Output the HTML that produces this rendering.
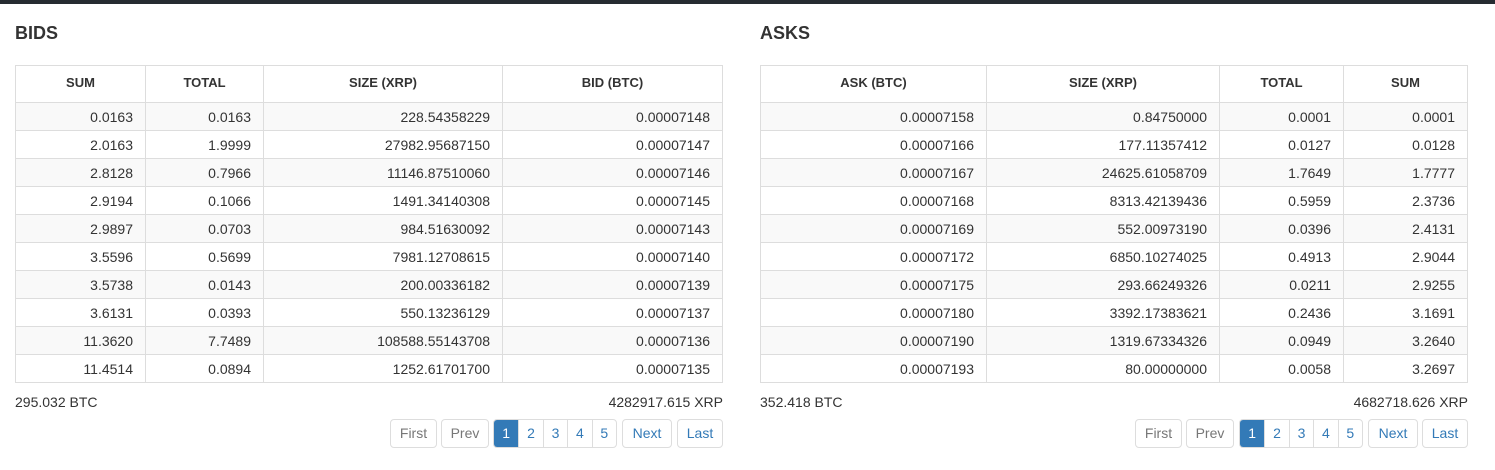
<!DOCTYPE html>
<html><head><meta charset="utf-8"><style>
*{box-sizing:border-box;margin:0;padding:0}
body{width:1495px;height:470px;background:#fff;font-family:"Liberation Sans",sans-serif;color:#333;position:relative;overflow:hidden}
.bar{position:absolute;left:0;top:0;width:1495px;height:4px;background:#262b31}
h2{position:absolute;top:23px;font-size:18px;font-weight:bold;color:#333}
table{position:absolute;top:65px;border-collapse:collapse;table-layout:fixed;font-size:14px}
th{height:37px;font-size:13px;font-weight:bold;text-align:center;border:1px solid #ddd;padding:0 8px 4px}
td{height:28px;text-align:right;border:1px solid #ddd;padding:0 12px;color:#333}
tr:nth-child(even) td{background:#f9f9f9}
.tot{position:absolute;top:394px;font-size:14px}
.pg{position:absolute;top:419px;height:29px;border:1px solid #ddd;border-radius:4px;font-size:14px;line-height:27px;text-align:center;color:#777;background:#fff}
.grp{position:absolute;top:419px;height:29px;display:flex;border:1px solid #ddd;border-radius:4px;overflow:hidden;font-size:14px;line-height:27px}
.grp span{width:25px;text-align:center;color:#337ab7;border-left:1px solid #ddd}
.grp span:first-child{border-left:none;background:#337ab7;color:#fff;width:25px}
.blue{color:#337ab7}
</style></head><body>
<div class="bar"></div>
<h2 style="left:15px">BIDS</h2>
<h2 style="left:760px">ASKS</h2>
<table style="left:15px;width:707px">
<colgroup><col style="width:130px"><col style="width:118px"><col style="width:239px"><col style="width:220px"></colgroup>
<tr><th>SUM</th><th>TOTAL</th><th>SIZE (XRP)</th><th>BID (BTC)</th></tr>
<tr><td>0.0163</td><td>0.0163</td><td>228.54358229</td><td>0.00007148</td></tr>
<tr><td>2.0163</td><td>1.9999</td><td>27982.95687150</td><td>0.00007147</td></tr>
<tr><td>2.8128</td><td>0.7966</td><td>11146.87510060</td><td>0.00007146</td></tr>
<tr><td>2.9194</td><td>0.1066</td><td>1491.34140308</td><td>0.00007145</td></tr>
<tr><td>2.9897</td><td>0.0703</td><td>984.51630092</td><td>0.00007143</td></tr>
<tr><td>3.5596</td><td>0.5699</td><td>7981.12708615</td><td>0.00007140</td></tr>
<tr><td>3.5738</td><td>0.0143</td><td>200.00336182</td><td>0.00007139</td></tr>
<tr><td>3.6131</td><td>0.0393</td><td>550.13236129</td><td>0.00007137</td></tr>
<tr><td>11.3620</td><td>7.7489</td><td>108588.55143708</td><td>0.00007136</td></tr>
<tr><td>11.4514</td><td>0.0894</td><td>1252.61701700</td><td>0.00007135</td></tr>
</table>
<table style="left:760px;width:707px">
<colgroup><col style="width:226px"><col style="width:233px"><col style="width:124px"><col style="width:124px"></colgroup>
<tr><th>ASK (BTC)</th><th>SIZE (XRP)</th><th>TOTAL</th><th>SUM</th></tr>
<tr><td>0.00007158</td><td>0.84750000</td><td>0.0001</td><td>0.0001</td></tr>
<tr><td>0.00007166</td><td>177.11357412</td><td>0.0127</td><td>0.0128</td></tr>
<tr><td>0.00007167</td><td>24625.61058709</td><td>1.7649</td><td>1.7777</td></tr>
<tr><td>0.00007168</td><td>8313.42139436</td><td>0.5959</td><td>2.3736</td></tr>
<tr><td>0.00007169</td><td>552.00973190</td><td>0.0396</td><td>2.4131</td></tr>
<tr><td>0.00007172</td><td>6850.10274025</td><td>0.4913</td><td>2.9044</td></tr>
<tr><td>0.00007175</td><td>293.66249326</td><td>0.0211</td><td>2.9255</td></tr>
<tr><td>0.00007180</td><td>3392.17383621</td><td>0.2436</td><td>3.1691</td></tr>
<tr><td>0.00007190</td><td>1319.67334326</td><td>0.0949</td><td>3.2640</td></tr>
<tr><td>0.00007193</td><td>80.00000000</td><td>0.0058</td><td>3.2697</td></tr>
</table>
<div class="tot" style="left:15px">295.032 BTC</div>
<div class="tot" style="right:772px">4282917.615 XRP</div>
<div class="tot" style="left:760px">352.418 BTC</div>
<div class="tot" style="right:27px">4682718.626 XRP</div>

<div class="pg" style="left:390px;width:47px">First</div>
<div class="pg" style="left:441px;width:48px">Prev</div>
<div class="grp" style="left:493px;width:124px"><span>1</span><span>2</span><span>3</span><span>4</span><span>5</span></div>
<div class="pg blue" style="left:622px;width:50px">Next</div>
<div class="pg blue" style="left:677px;width:46px">Last</div>

<div class="pg" style="left:1135px;width:47px">First</div>
<div class="pg" style="left:1186px;width:48px">Prev</div>
<div class="grp" style="left:1239px;width:124px"><span>1</span><span>2</span><span>3</span><span>4</span><span>5</span></div>
<div class="pg blue" style="left:1368px;width:50px">Next</div>
<div class="pg blue" style="left:1422px;width:46px">Last</div>
</body></html>
